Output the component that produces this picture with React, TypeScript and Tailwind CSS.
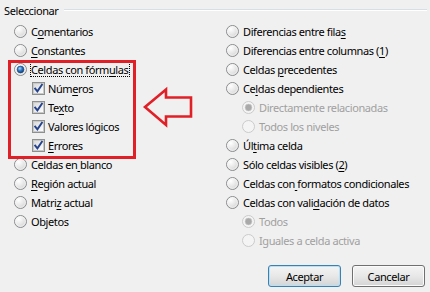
import React from "react";

type RState = { checked?: boolean; disabled?: boolean };

function Radio({ checked, disabled }: RState) {
  return (
    <svg width="13" height="13" viewBox="0 0 13 13" className="shrink-0">
      <circle
        cx="6.5"
        cy="6.5"
        r="6"
        fill={disabled ? "#f4f4f4" : "url(#rfill)"}
        stroke={disabled ? "#cacaca" : "#8a8c8e"}
        strokeWidth="1"
      />
      {!disabled && <circle cx="6.5" cy="6.5" r="4.8" fill="none" stroke="#f7f7f7" strokeWidth="0.8" />}
      {checked && (
        <circle
          cx="6.5"
          cy="6.5"
          r="3.4"
          fill={disabled ? "#a9a9a9" : "url(#rdot)"}
          stroke={disabled ? "#c9c9c9" : "#1b3f72"}
          strokeWidth="0.6"
        />
      )}
    </svg>
  );
}

function Check() {
  return (
    <svg width="13" height="13" viewBox="0 0 13 13" className="shrink-0">
      <rect x="0.5" y="0.5" width="12" height="12" fill="#f2f2f2" stroke="#8e8f8f" />
      <rect x="1.5" y="1.5" width="10" height="10" fill="url(#cfill)" stroke="#c9c9c9" strokeWidth="1" />
      <path d="M3.2 6.6 L5.4 9.4 L9.9 2.8" fill="none" stroke="#23438e" strokeWidth="1.9" strokeLinecap="square" />
    </svg>
  );
}

function Label({ text, u, disabled }: { text: string; u?: number; disabled?: boolean }) {
  const cls = disabled ? "text-[#a0a0a0]" : "text-black";
  if (u === undefined) return <span className={cls}>{text}</span>;
  return (
    <span className={cls}>
      {text.slice(0, u)}
      <u className="underline-offset-[2px]">{text.slice(u, u + 1)}</u>
      {text.slice(u + 1)}
    </span>
  );
}

function RadioRow({
  text,
  u,
  checked,
  disabled,
  indent,
  focus,
}: {
  text: string;
  u?: number;
  checked?: boolean;
  disabled?: boolean;
  indent?: boolean;
  focus?: boolean;
}) {
  return (
    <div className={`flex items-center h-[19px] ${indent ? "pl-[16px]" : ""}`}>
      <Radio checked={checked} disabled={disabled} />
      {focus ? (
        <span className="ml-[3px] border border-dotted border-black leading-[13px] pr-[1px] whitespace-nowrap">
          <Label text={text} u={u} disabled={disabled} />
        </span>
      ) : (
        <span className="ml-[4px] whitespace-nowrap">
          <Label text={text} u={u} disabled={disabled} />
        </span>
      )}
    </div>
  );
}

function CheckRow({ text, u }: { text: string; u?: number }) {
  return (
    <div className="flex items-center h-[19px] pl-[18px]">
      <Check />
      <span className="ml-[3px] whitespace-nowrap">
        <Label text={text} u={u} />
      </span>
    </div>
  );
}

function Btn({ text, def }: { text: string; def?: boolean }) {
  return (
    <div
      className={`w-[73px] h-[22px] rounded-[3px] border flex items-center justify-center bg-linear-to-b from-[#f4f4f4] via-[#e8e8e8] to-[#d4d4d4] ${
        def
          ? "border-[#3c7fb1] shadow-[inset_0_0_0_1px_#b9e1f6]"
          : "border-[#707070] shadow-[inset_0_0_0_1px_#fbfbfb]"
      }`}
    >
      {text}
    </div>
  );
}

export default function App() {
  return (
    <div className="relative w-[430px] h-[292px] bg-[#f0f0f0] overflow-hidden font-['Noto_Sans',sans-serif] text-[11px] tracking-[-0.4px] leading-[15px] text-black">
      <svg width="0" height="0" className="absolute">
        <defs>
          <radialGradient id="rfill" cx="0.35" cy="0.3" r="0.8">
            <stop offset="0" stopColor="#ffffff" />
            <stop offset="0.6" stopColor="#e4e4e4" />
            <stop offset="1" stopColor="#c8c8c8" />
          </radialGradient>
          <radialGradient id="rdot" cx="0.4" cy="0.35" r="0.7">
            <stop offset="0" stopColor="#a9dcfb" />
            <stop offset="0.5" stopColor="#2b74c0" />
            <stop offset="1" stopColor="#0f3a78" />
          </radialGradient>
          <linearGradient id="cfill" x1="0" y1="0" x2="1" y2="1">
            <stop offset="0" stopColor="#d8d8d8" />
            <stop offset="1" stopColor="#ffffff" />
          </linearGradient>
        </defs>
      </svg>

      <div className="flex items-center h-[20px] pl-[4px] pr-[3px]">
        <span>Seleccionar</span>
        <div className="flex-1 ml-[6px] h-[2px] border-t border-[#d5dfe5] border-b-white border-b" />
      </div>

      <div className="mt-[2px] grid grid-cols-[226px_1fr]">
        <div className="pl-[14px] flex flex-col">
          <RadioRow text="Comentarios" u={1} />
          <RadioRow text="Constantes" u={0} />
          <RadioRow text="Celdas con fórmulas" u={15} checked focus />
          <CheckRow text="Números" u={3} />
          <CheckRow text="Texto" u={2} />
          <CheckRow text="Valores lógicos" />
          <CheckRow text="Errores" u={0} />
          <RadioRow text="Celdas en blanco" u={9} />
          <RadioRow text="Región actual" u={0} />
          <RadioRow text="Matriz actual" u={5} />
          <RadioRow text="Objetos" u={2} />
        </div>
        <div className="flex flex-col">
          <RadioRow text="Diferencias entre filas" u={22} />
          <RadioRow text="Diferencias entre columnas (1)" u={28} />
          <RadioRow text="Celdas precedentes" u={7} />
          <RadioRow text="Celdas dependientes" u={2} />
          <RadioRow text="Directamente relacionadas" indent checked disabled />
          <RadioRow text="Todos los niveles" indent disabled />
          <RadioRow text="Última celda" u={2} />
          <RadioRow text="Sólo celdas visibles (2)" u={22} />
          <RadioRow text="Celdas con formatos condicionales" u={10} />
          <RadioRow text="Celdas con validación de datos" u={15} />
          <RadioRow text="Todos" indent checked disabled />
          <RadioRow text="Iguales a celda activa" indent disabled />
        </div>
      </div>

      <div className="mt-[15px] flex justify-end gap-[11px] pr-[5px]">
        <Btn text="Aceptar" def />
        <Btn text="Cancelar" />
      </div>

      {/* annotation overlay */}
      <div className="absolute left-[8px] top-[60px] w-[128px] h-[99px] border-[3px] border-[#e11f26]" />
      <svg className="absolute left-0 top-0" width="430" height="292" viewBox="0 0 430 292">
        <polygon
          points="145,107 166,89.5 166,97.5 191,97.5 191,116.5 166,116.5 166,125 "
          fill="none"
          stroke="#e11f26"
          strokeWidth="2.6"
          strokeLinejoin="miter"
        />
      </svg>
    </div>
  );
}
